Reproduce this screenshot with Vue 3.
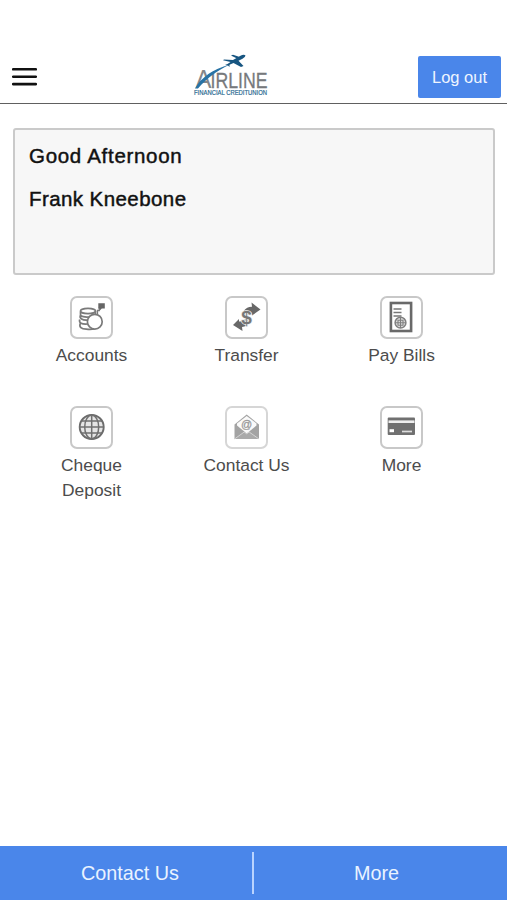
<!-- Home screen -->

<script setup>
  import { ref } from 'vue';

  const greeting = ref('Good Afternoon');
  const member = ref('Frank Kneebone');

  // Tiles of the main menu
  const tiles = [
    { icon: 'accounts', label: 'Accounts' },
    { icon: 'transfer', label: 'Transfer' },
    { icon: 'bills', label: 'Pay Bills' },
    { icon: 'globe', label: 'Cheque Deposit' },
    { icon: 'mail', label: 'Contact Us' },
    { icon: 'card', label: 'More' },
  ];
</script>

<template>
  <div class="screen">
    <header class="top-bar">
      <button class="menu-button" aria-label="Menu">
        <svg width="25" height="20" viewBox="0 0 25 20">
          <path d="M1.200 2.300h22.600M1.200 9.700h22.600M1.200 17.100h22.600" stroke="#111" stroke-width="2.600" stroke-linecap="round" />
        </svg>
      </button>

      <svg class="logo" width="78" height="46" viewBox="0 1 78 46">
        <g font-family="'Liberation Sans', Arial, sans-serif">
          <text x="2.500" y="35" font-size="25" textLength="16" lengthAdjust="spacingAndGlyphs" fill="#85878a">A</text>
          <text x="17.500" y="35" font-size="22" textLength="57" lengthAdjust="spacingAndGlyphs" fill="#77797c" stroke="#77797c" stroke-width="0.300">IRLINE</text>
          <text x="1" y="41.500" font-size="7.200" textLength="73" lengthAdjust="spacingAndGlyphs" fill="#286990" stroke="#286990" stroke-width="0.200">FINANCIAL CREDITUNION</text>
        </g>
        <path d="M2 35.500C9 24 19 16.500 37 11.500C23 18 13 26 5 35.500Z" fill="#2873a5" />
        <path d="M31 6.500L40 7L47 3Q51 0.800 52.500 2.500Q52.500 4 49.500 5.700L45.500 7.800L50.500 13L48 14L40.500 10.100L36.500 11.800L36.500 14L35 12.600L32 12L34.500 10.900L37.500 9L30 7.300ZM38 2.500L40 1.800L46 3.700L43.500 5.200Z" fill="#175581" />
      </svg>

      <button class="logout">Log out</button>
    </header>

    <section class="welcome">
      <p class="greeting">{{ greeting }}</p>
      <p>{{ member }}</p>
    </section>

    <nav class="tiles">
      <a v-for="tile in tiles" :key="tile.icon" class="tile">
        <span class="tile-icon" :class="{ light: tile.icon === 'mail' }">
          <!-- coins with a small flag -->
          <svg v-if="tile.icon === 'accounts'" width="41" height="41" viewBox="0 0 41 41">
            <g fill="none" stroke="#7a7a7a" stroke-width="1.700">
              <ellipse cx="17" cy="14" rx="7.500" ry="2.700" />
              <path d="M9.500 14.500v3c0 2 4.500 3 8.500 2.500M9.500 18c-1.500 3.500 2 5.500 7.500 5M8.700 22.500c-1 3.500 2 5 8 4.500M9.300 26.500c-1.500 3.500 1 5.500 6 5.700c3 .3 6 .2 8-.2M24.500 14v4" />
              <circle cx="23.800" cy="24.700" r="7.400" fill="#fff" />
              <path d="M26.500 17v-3.500h1.800v-3" stroke-width="1.300" />
            </g>
            <path d="M27.300 6.200h6.500v5.300h-3l-2 2v-2h-1.500z" fill="#666" />
          </svg>

          <!-- arrows with a dollar sign -->
          <svg v-else-if="tile.icon === 'transfer'" width="41" height="41" viewBox="0 0 41 41">
            <path d="M25.500 5.500L34.500 12.500L26 18.500L25.500 15.500L20 18L18 13.500Q21 9.500 26 9.700ZM13 22L13 24.500Q17 25 20 21L23.500 25.500Q21 29.500 16 30L16.500 34L7 28Z" fill="#686868" />
            <text x="20.500" y="26.500" text-anchor="middle" font-size="19" font-weight="bold" font-family="'Liberation Sans', Arial, sans-serif" fill="#777" stroke="#eee" stroke-width="1.500" paint-order="stroke">$</text>
          </svg>

          <!-- bill -->
          <svg v-else-if="tile.icon === 'bills'" width="41" height="41" viewBox="0 0 41 41">
            <rect x="9.900" y="6" width="20.200" height="28" fill="#fff" stroke="#696969" stroke-width="2.600" />
            <path d="M12.500 12h8M12.500 15.500h8M12.500 19h8" stroke="#777" stroke-width="1.500" />
            <circle cx="19.500" cy="25.700" r="5.400" fill="#ddd" stroke="#808080" stroke-width="1.500" />
            <path d="M19.500 20.300v10.800M14 25.700h11M17 23.200h5v5h-5z" fill="none" stroke="#808080" stroke-width="1.100" />
          </svg>

          <svg v-else-if="tile.icon === 'globe'" width="41" height="41" viewBox="0 0 41 41">
            <circle cx="20.700" cy="20" r="12" fill="#e5e5e5" stroke="#6b6b6b" stroke-width="1.900" />
            <g fill="none" stroke="#707070" stroke-width="1.500">
              <ellipse cx="20.700" cy="20" rx="7" ry="12" />
              <path d="M20.700 8v24M8.700 20h24M10.200 14h21M10.200 26h21" />
            </g>
          </svg>

          <!-- open envelope -->
          <svg v-else-if="tile.icon === 'mail'" width="41" height="41" viewBox="0 0 41 41">
            <path d="M8.500 17.500L20.700 7.500L33 17.500V32H8.500Z" fill="#a3a3a3" />
            <path d="M11 18.500V16.500L20.700 9L30.500 16.500V18.500L20.700 26.500Z" fill="#fafafa" />
            <path d="M8.500 32L18.200 25L20.700 26.800L23.200 25L33 32" fill="#aaa" stroke="#ddd" stroke-width="0.800" />
            <text x="20.700" y="20.500" text-anchor="middle" font-size="11" font-family="'Liberation Sans', Arial, sans-serif" fill="#999" stroke="#999" stroke-width="0.300">@</text>
          </svg>

          <svg v-else width="41" height="41" viewBox="0 0 41 41">
            <rect x="6.700" y="10.500" width="27.300" height="17.500" rx="1" fill="#707070" />
            <path d="M7.500 14.700h26" stroke="#eee" stroke-width="2.600" />
            <path d="M8.500 23.700h4.500" stroke="#fff" stroke-width="3" />
            <path d="M21 24.500h10" stroke="#ddd" stroke-width="1.700" />
          </svg>
        </span>
        <span class="tile-label">{{ tile.label }}</span>
      </a>
    </nav>

    <footer class="bottom-bar">
      <a class="contact">Contact Us</a>
      <span class="divider"></span>
      <a class="more">More</a>
    </footer>
  </div>
</template>

<style>
body {
  margin: 0;
  background: #fff;
}
</style>

<style scoped>
.screen {
  display: flex;
  flex-direction: column;
  box-sizing: border-box;
  height: 900px;
  padding-top: 50px;
  background: #fff;
  font-family: "Liberation Sans", Arial, sans-serif;
}

.top-bar {
  display: grid;
  grid-template-columns: 181px 78px 1fr;
  align-items: center;
  box-sizing: border-box;
  height: 54px;
  padding: 0 6px 0 12px;
  border-bottom: 1px solid #606060;
}

.menu-button {
  display: flex;
  width: 25px;
  padding: 0;
  border: none;
  background: none;
}

.logo {
  overflow: visible;
}

.logout {
  justify-self: end;
  width: 83px;
  height: 42px;
  padding: 2px 0 0;
  border: none;
  border-radius: 2px;
  background: #4a86ea;
  color: #eef5ff;
  font-family: inherit;
  font-size: 16.500px;
}

.welcome {
  box-sizing: border-box;
  height: 147px;
  margin: 23.500px 12px 0 13px;
  padding: 12px 14px;
  border: 2px solid #cacaca;
  border-radius: 3px;
  background: #f7f7f7;
}

.welcome p {
  margin: 0 0 15px;
  color: #111;
  font-size: 20.500px;
  line-height: 28px;
  letter-spacing: 0.420px;
  -webkit-text-stroke: 0.450px #111;
}

.welcome .greeting {
  letter-spacing: 0.700px;
}

.tiles {
  display: grid;
  grid-template-columns: repeat(3, 155px);
  grid-auto-rows: 110px;
  margin: 21.500px 0 0 14px;
}

.tile {
  display: flex;
  flex-direction: column;
  align-items: center;
}

.tile-icon {
  display: flex;
  align-items: center;
  justify-content: center;
  box-sizing: border-box;
  width: 43px;
  height: 43px;
  border: 2px solid #c8c8c8;
  border-radius: 7px;
}

.tile-icon svg {
  flex-shrink: 0;
}

.tile-icon.light {
  border-color: #d6d6d6;
}

.tile-label {
  width: 100px;
  margin-top: 4px;
  color: #4c4c4c;
  font-size: 17.400px;
  line-height: 24.500px;
  text-align: center;
}

.bottom-bar {
  display: grid;
  grid-template-columns: 252px 2px 1fr;
  align-items: center;
  height: 54px;
  margin-top: auto;
  background: #4a86ea;
  color: #e9f3ff;
  font-size: 19.800px;
  text-align: center;
}

.contact {
  padding-left: 8px;
}

.more {
  padding-right: 8px;
}

.divider {
  height: 42px;
  background: #b9d3ff;
}
</style>
